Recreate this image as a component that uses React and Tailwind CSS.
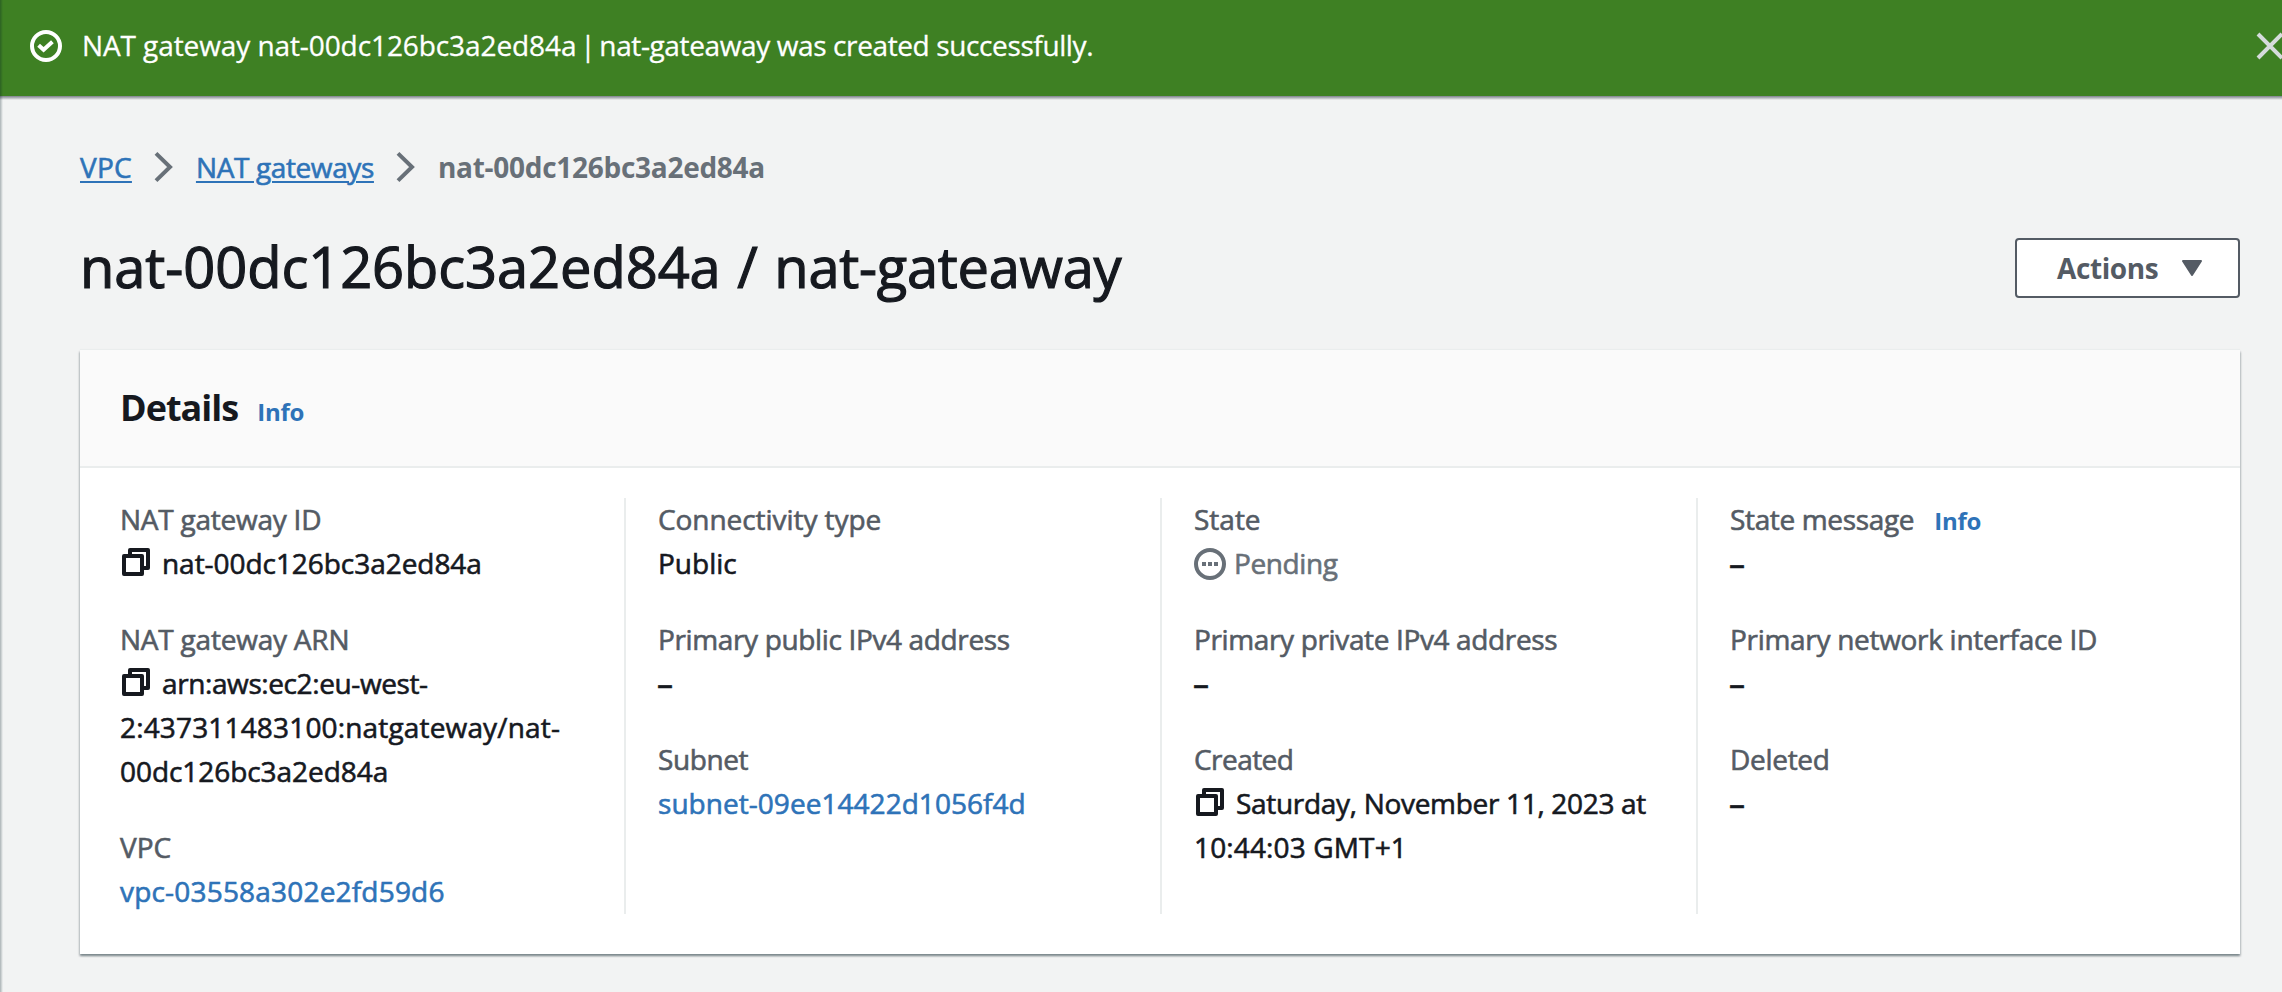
function CheckIcon() {
  return (
    <svg className="size-8 shrink-0" viewBox="0 0 32 32" fill="none" stroke="currentColor" strokeWidth="4">
      <circle cx="16" cy="16" r="14" />
      <path d="M8.6 15.2L13.6 19.8L22.4 11.8" />
    </svg>
  );
}

function CloseIcon() {
  return (
    <svg className="h-7 w-[28px] shrink-0" viewBox="0 0 28 28" fill="none" stroke="currentColor" strokeWidth="4">
      <path d="M2 2L26 26M26 2L2 26" />
    </svg>
  );
}

function ChevronIcon() {
  return (
    <svg className="h-8 w-5 shrink-0 text-[#687078]" viewBox="0 0 20 32" fill="none" stroke="currentColor" strokeWidth="4">
      <path d="M2 2.4L16 16L2 29.6" />
    </svg>
  );
}

function CopyIcon() {
  return (
    <svg className="mb-0.5 size-8 shrink-0" viewBox="0 0 32 32" fill="none" stroke="currentColor" strokeWidth="4" strokeLinejoin="round">
      <path d="M10 8V4H28V22H24" />
      <rect x="4" y="10" width="18" height="18" />
    </svg>
  );
}

function PendingIcon() {
  return (
    <svg className="mt-0.5 size-8 shrink-0" viewBox="0 0 32 32" fill="none" stroke="currentColor" strokeWidth="4">
      <circle cx="16" cy="16" r="14" />
      <path d="M8 16h4M14 16h4M20 16h4" />
    </svg>
  );
}

function Field({ label, labelTracking = "", info, children }) {
  return (
    <div>
      <div className="flex h-11 items-baseline text-[#545b64]">
        <span className={labelTracking}>{label}</span>
        {info && <InfoLink className="ml-[20px]" />}
      </div>
      <div className="text-[#16191f]">{children}</div>
    </div>
  );
}

function Line({ className = "", children }) {
  return <div className={"flex h-11 items-center " + className}>{children}</div>;
}

function Dash() {
  return <Line className="pt-0.5 text-[32px]"><span className="-ml-px">–</span></Line>;
}

function InfoLink({ className = "" }) {
  return <a className={"text-2xl leading-11 font-bold tracking-[-0.2px] text-[#2e73b8] [-webkit-text-stroke:0px] " + className}>Info</a>;
}

function Column({ first, children }) {
  return (
    <div className={"w-[536px] shrink-0 " + (first ? "pl-8" : "border-l-2 border-[#eaeded] pl-8")}>
      <div className="-mt-px flex flex-col gap-8">{children}</div>
    </div>
  );
}

export default function App() {
  return (
    <div className="relative h-[992px] w-[2282px] overflow-hidden bg-[#f2f3f3] font-['Open_Sans','Noto_Sans',sans-serif] text-[28px] leading-11 whitespace-nowrap text-[#16191f] [-webkit-text-stroke:0.6px]">
      <header className="flex h-24 items-center overflow-hidden bg-[#3e8023] pb-1 pl-[30px] text-white">
        <CheckIcon />
        <span className="-mt-[2px] ml-[20px] font-medium [-webkit-text-stroke:0.3px]">
          <span className="tracking-[-0.09px]">NAT gateway nat-00dc126bc3a2ed84a</span>
          <span className="[word-spacing:-3.5px]"> | </span>
          <span className="tracking-[-0.38px]">nat-gateaway was created successfully.</span>
        </span>
        <button className="-mr-[2px] ml-auto text-[#d5dbdb]"><CloseIcon /></button>
      </header>
      <div className="h-1 bg-linear-to-b from-[#7d818b] to-[#f2f3f3]" />

      <main className="pr-[42px] pl-20">
        <nav className="mt-[45px] flex h-11 items-center gap-[22px]">
          <a className="tracking-[0.25px] text-[#2e73b8] underline decoration-2 underline-offset-[3px]">VPC</a>
          <ChevronIcon />
          <a className="tracking-[-0.38px] text-[#2e73b8] underline decoration-2 underline-offset-[3px]">NAT gateways</a>
          <ChevronIcon />
          <span className="font-bold tracking-[-0.28px] text-[#687078] [-webkit-text-stroke:0px]">nat-00dc126bc3a2ed84a</span>
        </nav>

        <div className="mt-[41px] flex h-[72px] items-start justify-between">
          <h1 className="text-[56px] leading-[72px] [-webkit-text-stroke:1.2px]">
            <span className="tracking-[-0.05px]">nat-00dc126bc3a2ed84a</span>
            <span className="[word-spacing:2px]"> / </span>
            <span className="tracking-[-0.25px]">nat-gateaway</span>
          </h1>
          <button className="mt-2 flex h-[60px] w-[225px] items-center rounded-[4px] border-2 border-[#545b64] bg-white pl-10 font-bold text-[#545b64] [-webkit-text-stroke:0px]">
            <span className="-mt-px tracking-[-0.4px]">Actions</span>
            <svg className="ml-6 h-4 w-5" viewBox="0 0 20 16" fill="currentColor" stroke="currentColor" strokeWidth="2" strokeLinejoin="round">
              <path d="M1 1H19L10 15Z" />
            </svg>
          </button>
        </div>

        <section className="mt-12 h-[604px] bg-white shadow-[0_2px_2px_0_rgba(0,28,36,0.3),1px_2px_2px_0_rgba(0,28,36,0.15),-1px_2px_2px_0_rgba(0,28,36,0.15),0_-1px_1px_0_#eaeded]">
          <div className="flex h-[118px] items-center border-b-2 border-[#eaeded] bg-[#fafafa] pl-[40px]">
            <div className="mt-1 flex items-baseline">
              <h2 className="text-4xl leading-11 font-bold tracking-[-1px] [-webkit-text-stroke:0px]">Details</h2>
              <InfoLink className="ml-[19px]" />
            </div>
          </div>

          <div className="flex h-[446px] pt-[30px] pl-2">
            <Column first>
              <Field label="NAT gateway ID" labelTracking="tracking-[-0.24px]">
                <Line className="gap-[10px] tracking-[-0.05px]"><CopyIcon /><span>nat-00dc126bc3a2ed84a</span></Line>
              </Field>
              <Field label="NAT gateway ARN" labelTracking="tracking-[-0.22px]">
                <Line className="gap-[10px] tracking-[-0.4px]"><CopyIcon /><span>arn:aws:ec2:eu-west-</span></Line>
                <Line className="tracking-[0.16px]">2:437311483100:natgateway/nat-</Line>
                <Line className="tracking-[-0.06px]">00dc126bc3a2ed84a</Line>
              </Field>
              <Field label="VPC">
                <Line className="tracking-[0.19px] text-[#2e73b8]">vpc-03558a302e2fd59d6</Line>
              </Field>
            </Column>

            <Column>
              <Field label="Connectivity type" labelTracking="tracking-[-0.06px]"><Line>Public</Line></Field>
              <Field label="Primary public IPv4 address" labelTracking="tracking-[-0.36px]"><Dash /></Field>
              <Field label="Subnet" labelTracking="tracking-[-0.4px]">
                <Line className="tracking-[0.04px] text-[#2e73b8]">subnet-09ee14422d1056f4d</Line>
              </Field>
            </Column>

            <Column>
              <Field label="State">
                <Line className="gap-[8px] tracking-[-0.38px] text-[#687078]"><PendingIcon /><span>Pending</span></Line>
              </Field>
              <Field label="Primary private IPv4 address" labelTracking="tracking-[-0.36px]"><Dash /></Field>
              <Field label="Created" labelTracking="tracking-[-0.55px]">
                <Line className="gap-[10px] tracking-[-0.31px]"><CopyIcon /><span>Saturday, November 11, 2023 at</span></Line>
                <Line className="tracking-[0.14px]">10:44:03 GMT+1</Line>
              </Field>
            </Column>

            <Column>
              <Field label="State message" labelTracking="tracking-[-0.35px]" info><Dash /></Field>
              <Field label="Primary network interface ID" labelTracking="tracking-[-0.3px]"><Dash /></Field>
              <Field label="Deleted" labelTracking="tracking-[-0.3px]"><Dash /></Field>
            </Column>
          </div>
        </section>
      </main>

      <div className="absolute inset-y-0 left-0 w-[3px] bg-linear-to-r from-[#001c24]/30 to-transparent" />
    </div>
  );
}
